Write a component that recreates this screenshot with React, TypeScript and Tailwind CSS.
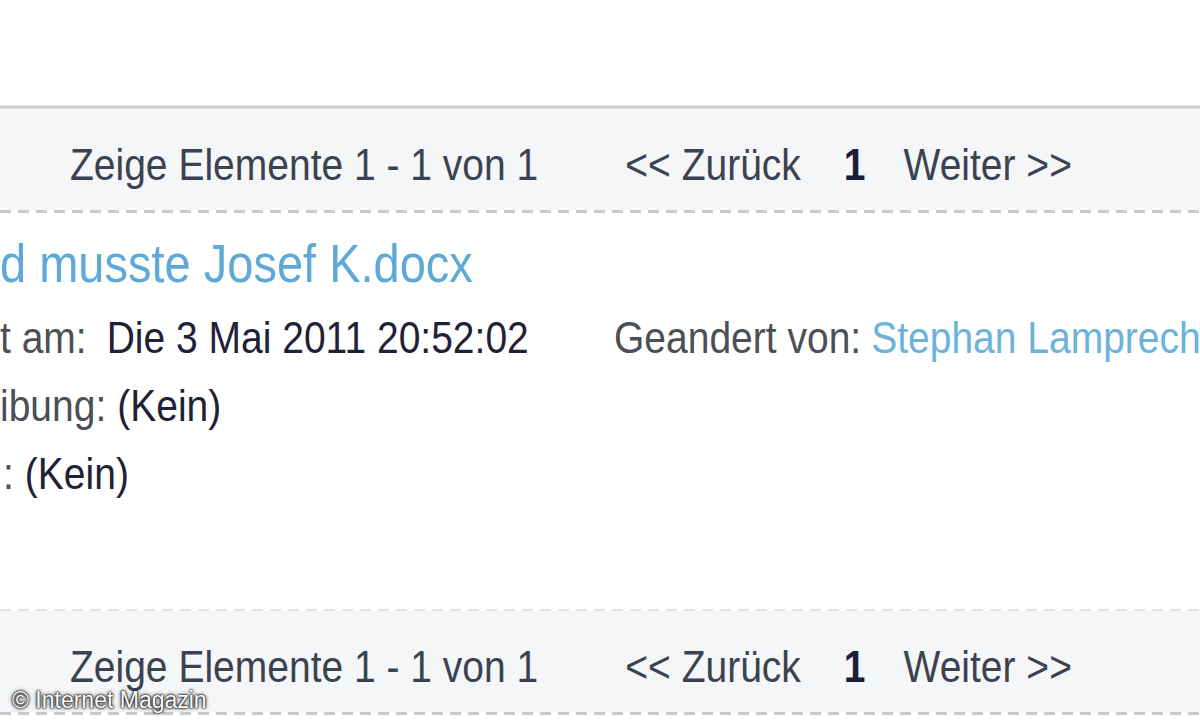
import React from 'react';

const dashes = 'h-[3px] bg-[repeating-linear-gradient(90deg,#c9c9c9_0_11px,transparent_11px_18px)]';

function Pager() {
  return (
    <div className="h-[101px] bg-[#f4f6f7] flex items-center pt-[9px] pl-[70px] text-[39px] leading-none text-[#3d4250]">
      <div className="flex items-center scale-y-[1.15]">
        <span>Zeige Elemente 1 - 1 von 1</span>
        <span className="ml-[87px]">&lt;&lt; Zurück</span>
        <span className="ml-[43px] font-bold text-[#1c1d38]">1</span>
        <span className="ml-[38px]">Weiter &gt;&gt;</span>
      </div>
    </div>
  );
}

function Field({ label, value, gap }: { label: string; value: string; gap: string }) {
  return (
    <div className="flex items-center">
      <span className="text-[#4c4f55]">{label}</span>
      <span className={`${gap} text-[#1f2236]`}>{value}</span>
    </div>
  );
}

export default function App() {
  return (
    <div className="w-[1200px] h-[720px] bg-white overflow-hidden relative font-['Liberation_Sans',Arial,sans-serif]">
      <div className="h-[105px]" />
      <div className="h-[4px] bg-[#cfcfcf] border-y border-[#e0e0e0]" />

      <Pager />
      <div className={dashes} />

      {/* document entry */}
      <div className="h-[396px] pt-[27px] whitespace-nowrap">
        <div className="text-[47px] leading-none text-[#5ea9d7] scale-y-[1.15] origin-center">
          d musste Josef K.docx
        </div>

        <div className="mt-[31px] flex flex-col gap-[29px] text-[39px] leading-none">
          <div className="flex items-center scale-y-[1.15]">
            <div className="w-[614px] shrink-0">
              <Field label="t am:" value="Die 3 Mai 2011 20:52:02" gap="ml-[20px]" />
            </div>
            <div className="flex items-center shrink-0">
              <span className="text-[#4c4f55]">Geandert von:</span>
              <span className="ml-[10px] text-[#6cb2da]">Stephan Lamprecht</span>
            </div>
          </div>
          <div className="scale-y-[1.15]">
            <Field label="ibung:" value="(Kein)" gap="ml-[11px]" />
          </div>
          <div className="scale-y-[1.15] pl-[3px]">
            <Field label=":" value="(Kein)" gap="ml-[11px]" />
          </div>
        </div>
      </div>

      <div className="h-[2px] bg-[repeating-linear-gradient(90deg,#e3e3e3_0_11px,transparent_11px_18px)]" />
      <Pager />
      <div className={dashes} />

      <div className="absolute left-[12px] bottom-[8px] text-[23px] leading-none text-white [text-shadow:0_0_2px_#000,0_0_2px_#000,0_0_4px_#222]">
        © Internet Magazin
      </div>
    </div>
  );
}
